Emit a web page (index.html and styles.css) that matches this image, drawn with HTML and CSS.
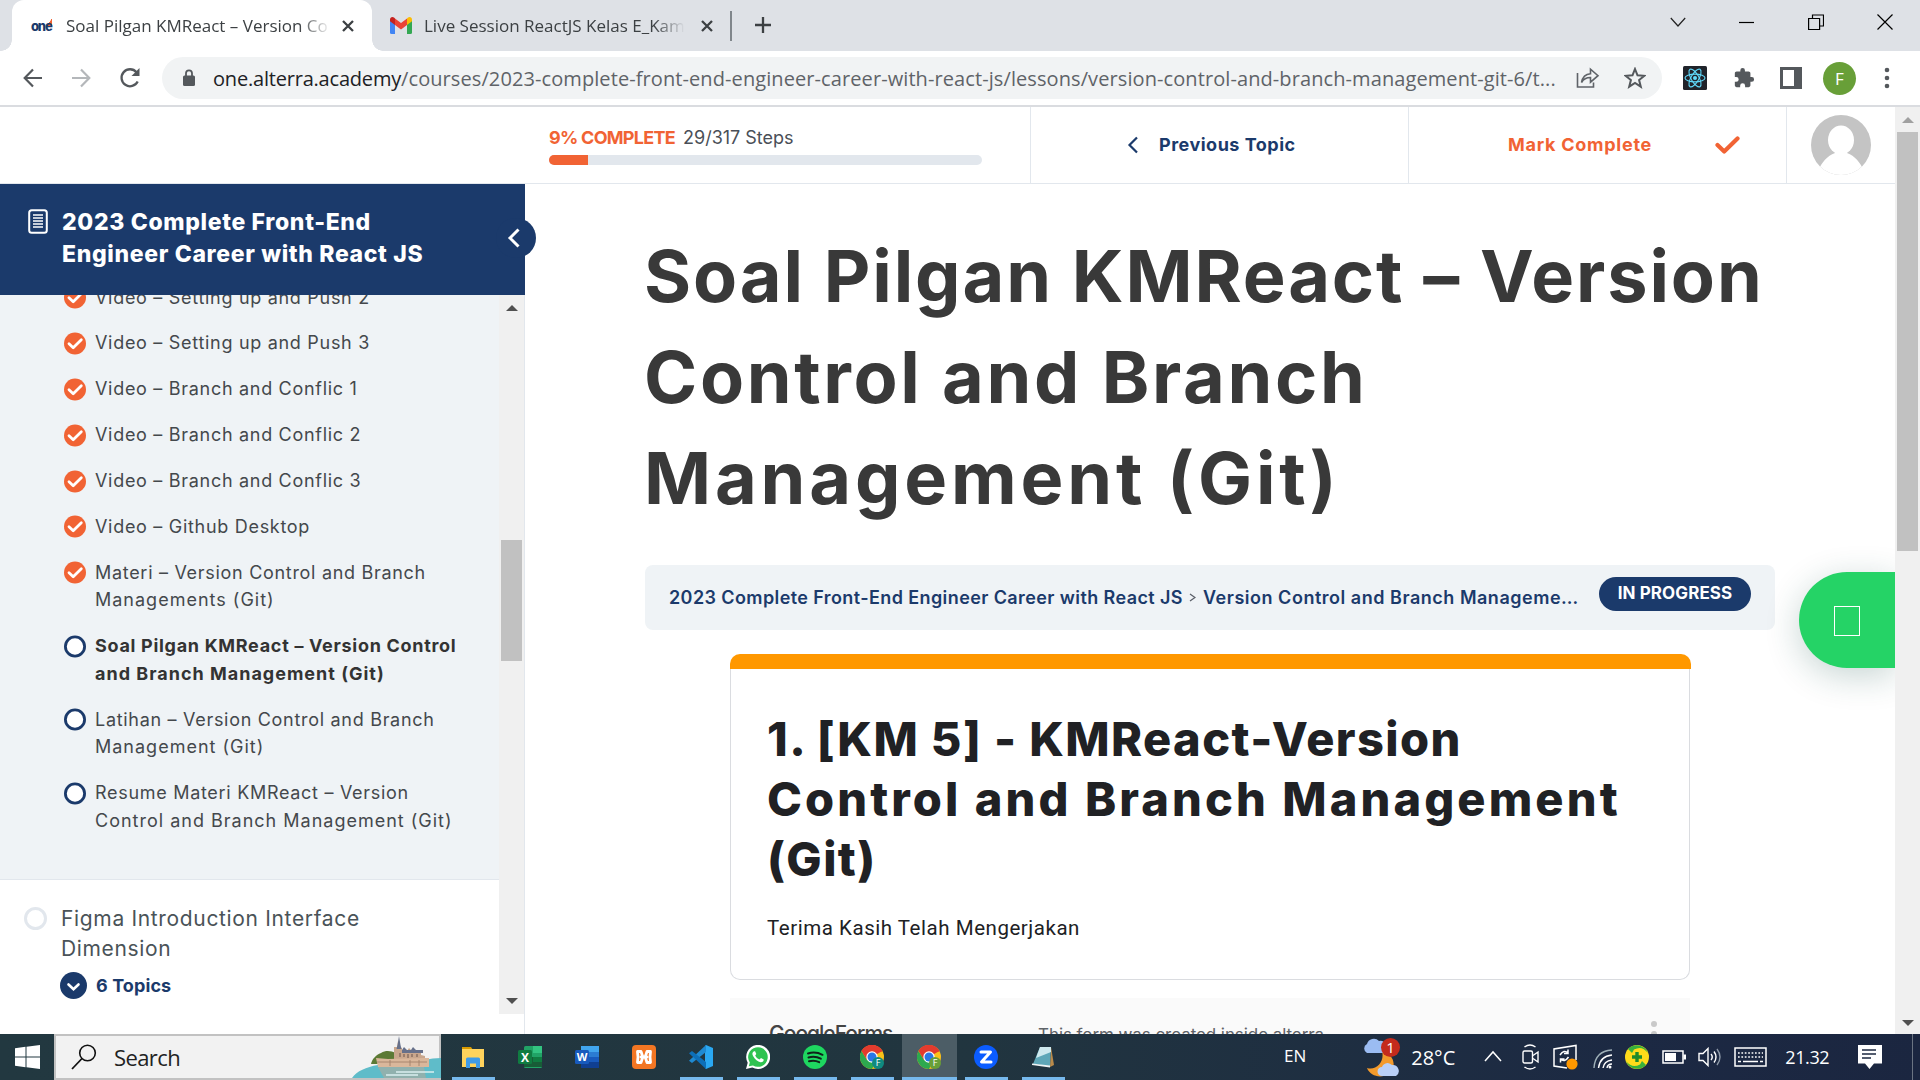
FILE: index.html
```html
<!DOCTYPE html>
<html lang="en">
<head>
<meta charset="utf-8">
<title>Soal Pilgan KMReact – Version Control and Branch Management (Git)</title>
<link rel="stylesheet" href="styles.css">
</head>
<body>
<svg width="0" height="0" class="defs" aria-hidden="true">
  <symbol id="done" viewBox="0 0 22 22"><circle cx="11" cy="11" r="11" fill="#f16334"/><path d="M5 11.3l4.2 4L17.3 7.2" fill="none" stroke="#fff" stroke-width="2.8" stroke-linecap="round" stroke-linejoin="round"/></symbol>
  <symbol id="todo" viewBox="0 0 22 22"><circle cx="11" cy="11" r="9.6" fill="#fff" stroke="#1b3a6b" stroke-width="2.8"/></symbol>
  <symbol id="x" viewBox="0 0 12 12"><path d="M1 1l10 10M11 1L1 11" stroke="#3c4043" stroke-width="2.3"/></symbol>
  <symbol id="chrome" viewBox="0 0 24 24"><circle cx="12" cy="12" r="12" fill="#fbc118"/><path d="M12 12L1.6 6A12 12 0 0 1 22.4 6z" fill="#e33b2e"/><path d="M1.6 6A12 12 0 0 0 12 24L17 15 7 15z" fill="#2da94f"/><path d="M12 6.5h10.6A12 12 0 0 0 1.6 6L7 15z" fill="#e33b2e"/><circle cx="12" cy="12" r="5.7" fill="#fff"/><circle cx="12" cy="12" r="4.5" fill="#2a76e8"/></symbol>
</svg>

<div class="tabstrip">
  <div class="tab active">
    <span class="favicon-one">one</span>
    <span class="tab-title t1">Soal Pilgan KMReact – Version Co</span>
    <svg class="tab-x" width="12" height="12"><use href="#x"/></svg>
  </div>
  <div class="tab second">
    <svg width="22" height="17" viewBox="0 0 22 17"><path d="M0 3v12.5A1.5 1.5 0 0 0 1.500 17H5V6z" fill="#4285f4"/><path d="M22 3v12.500a1.500 1.500 0 0 1-1.500 1.500H17V6z" fill="#34a853"/><path d="M17 1.500V8l5-3.800V2.500c0-2.200-2.300-3.200-4-1.900z" fill="#fbbc04"/><path d="M5 8V1.500l6 4.500 6-4.500V8l-6 4.500z" fill="#ea4335"/><path d="M0 2.500v1.700L5 8V1.500L4 .6C2.300-.7 0 .3 0 2.500z" fill="#c5221f"/></svg>
    <span class="tab-title t2">Live Session ReactJS Kelas E_Kam</span>
    <svg class="tab-x" width="12" height="12"><use href="#x"/></svg>
  </div>
  <span class="tab-sep"></span>
  <svg class="plus" width="18" height="18" viewBox="0 0 18 18"><path d="M9 1v16M1 9h16" stroke="#3c4043" stroke-width="2.300"/></svg>
  <div class="win">
    <svg width="16" height="16" viewBox="0 0 16 16"><path d="M.8 4L8 12l7.200-8" fill="none" stroke="#222" stroke-width="1.200"/></svg>
    <svg width="16" height="16" viewBox="0 0 16 16"><path d="M0 8.500h15" stroke="#000" stroke-width="1.200"/></svg>
    <svg width="16" height="16" viewBox="0 0 16 16"><path d="M.6 4.500h11v11h-11zM4.500 4.500v-3.500h11v11h-4" fill="none" stroke="#000" stroke-width="1.200"/></svg>
    <svg width="16" height="16" viewBox="0 0 16 16"><path d="M.5 .5l15 15M15.500 .5l-15 15" stroke="#000" stroke-width="1.200"/></svg>
  </div>
</div>

<div class="toolbar">
  <svg class="nav-i" width="20" height="20" viewBox="0 0 20 20"><path d="M19 10H2M10 1.500L1.700 10 10 18.500" fill="none" stroke="#54585c" stroke-width="2.200"/></svg>
  <svg class="nav-i" width="20" height="20" viewBox="0 0 20 20"><path d="M1 10h17M10 1.500l8.300 8.500L10 18.500" fill="none" stroke="#b4b7ba" stroke-width="2.200"/></svg>
  <svg class="nav-i" width="22" height="22" viewBox="0 0 22 22"><path d="M18.700 14.500A8.500 8.500 0 1 1 17.500 5.200" fill="none" stroke="#54585c" stroke-width="2.300"/><path d="M20.500 1v8h-8z" fill="#54585c"/></svg>
  <div class="omnibox">
    <svg width="12" height="18" viewBox="0 0 12 18"><rect y="6.500" width="12" height="10.500" rx="1.500" fill="#54585c"/><path d="M3 7V4.300a3 3 0 0 1 6 0V7" fill="none" stroke="#54585c" stroke-width="1.800"/></svg>
    <span class="url"><b>one.alterra.academy</b>/courses/2023-complete-front-end-engineer-career-with-react-js/lessons/version-control-and-branch-management-git-6/t...</span>
    <svg class="share" width="24" height="22" viewBox="0 0 24 22"><path d="M1.500 6v14h16v-4.500M5.500 15.500C6.500 10 9.500 7 14.500 6.700V2.200l7.500 6.500-7.500 6.500v-4.700C10.500 10.500 7.500 12 5.500 15.500z" fill="none" stroke="#5f6368" stroke-width="1.600"/></svg>
    <svg class="star" width="22" height="22" viewBox="0 0 22 22"><path d="M11 2l2.500 6.300 6.800.5-5.200 4.300 1.700 6.600L11 16l-5.800 3.700 1.700-6.600L1.700 8.800l6.800-.5z" fill="none" stroke="#54585c" stroke-width="2"/></svg>
  </div>
  <svg class="ext react" width="24" height="24" viewBox="0 0 24 24"><rect width="24" height="24" rx="1.500" fill="#20232a"/><g fill="none" stroke="#61dafb" stroke-width="1.100"><ellipse cx="12" cy="12" rx="10" ry="3.900"/><ellipse cx="12" cy="12" rx="10" ry="3.900" transform="rotate(60 12 12)"/><ellipse cx="12" cy="12" rx="10" ry="3.900" transform="rotate(120 12 12)"/></g><circle cx="12" cy="12" r="2" fill="#61dafb"/></svg>
  <svg class="ext puzzle" width="22" height="22" viewBox="0 0 24 24"><path fill="#54585c" d="M20.500 11H19V7c0-1.100-.9-2-2-2h-4V3.500a2.500 2.500 0 0 0-5 0V5H4c-1.100 0-2 .9-2 2v3.800h1.500a2.700 2.700 0 0 1 0 5.400H2V20c0 1.100.9 2 2 2h3.800v-1.500a2.700 2.700 0 0 1 5.400 0V22H17c1.100 0 2-.9 2-2v-4h1.500a2.500 2.500 0 0 0 0-5z"/></svg>
  <svg class="ext panel" width="22" height="22" viewBox="0 0 22 22"><path fill-rule="evenodd" d="M0 0h22v22H0zM3 3v16h11V3z" fill="#54585c"/></svg>
  <span class="profile">F</span>
  <svg class="ext menu" width="6" height="22" viewBox="0 0 6 22"><g fill="#54585c"><circle cx="3" cy="3" r="2.300"/><circle cx="3" cy="11" r="2.300"/><circle cx="3" cy="19" r="2.300"/></g></svg>
</div>

<div class="page">
  <div class="content">
    <header class="head">
      <div class="progress">
        <div class="ptext"><b>9% COMPLETE</b><span>29/317 Steps</span></div>
        <div class="bar"><i style="width:9%"></i></div>
      </div>
      <div class="prev">
        <svg width="12" height="18" viewBox="0 0 12 18"><path d="M10 1.500L2.500 9l7.500 7.500" fill="none" stroke="#1b3a6b" stroke-width="2.200"/></svg>
        <span>Previous Topic</span>
      </div>
      <div class="mark">
        <span>Mark Complete</span>
        <svg width="25" height="18" viewBox="0 0 25 18"><path d="M2.500 9l6.700 6.500L22.500 2.500" fill="none" stroke="#f16334" stroke-width="4.200" stroke-linecap="round" stroke-linejoin="round"/></svg>
      </div>
      <div class="user">
        <svg width="60" height="60" viewBox="0 0 60 60"><clipPath id="c"><circle cx="30" cy="30" r="30"/></clipPath><g clip-path="url(#c)"><rect width="60" height="60" fill="#c4c4c4"/><ellipse cx="30" cy="25" rx="13" ry="14.500" fill="#fff"/><path d="M24 32h12v6c8 3 13 9 17 18v6H7v-6c4-9 9-15 17-18z" fill="#fff"/></g></svg>
      </div>
    </header>

    <div class="body">
      <aside class="side">
        <div class="course">
          <svg width="20" height="25" viewBox="0 0 20 25"><rect x="1.200" y="1.200" width="17.600" height="22.600" rx="2.500" fill="none" stroke="#fff" stroke-width="2"/><path d="M5 6h10M5 9h10M5 12h10M5 15h10M5 18h10" stroke="#fff" stroke-width="1.300"/></svg>
          <h2>2023 Complete Front-End<br>Engineer Career with React JS</h2>
          <span class="collapse"><svg width="14" height="20" viewBox="0 0 14 20"><path d="M11.500 1.500L3 10l8.500 8.500" fill="none" stroke="#fff" stroke-width="3"/></svg></span>
        </div>
        <div class="scroller">
          <div class="list">
            <div class="topics">
              <div class="topic"><svg><use href="#done"/></svg><p>Video – Setting up and Push 2</p></div>
              <div class="topic"><svg><use href="#done"/></svg><p>Video – Setting up and Push 3</p></div>
              <div class="topic"><svg><use href="#done"/></svg><p>Video – Branch and Conflic 1</p></div>
              <div class="topic"><svg><use href="#done"/></svg><p>Video – Branch and Conflic 2</p></div>
              <div class="topic"><svg><use href="#done"/></svg><p>Video – Branch and Conflic 3</p></div>
              <div class="topic"><svg><use href="#done"/></svg><p>Video – Github Desktop</p></div>
              <div class="topic"><svg><use href="#done"/></svg><p>Materi – Version Control and Branch<br><span class="wide">Managements (Git)</span></p></div>
              <div class="topic current"><svg><use href="#todo"/></svg><p>Soal Pilgan KMReact – Version Control<br><span class="wide">and Branch Management (Git)</span></p></div>
              <div class="topic"><svg><use href="#todo"/></svg><p>Latihan – Version Control and Branch<br><span class="wide">Management (Git)</span></p></div>
              <div class="topic"><svg><use href="#todo"/></svg><p>Resume Materi KMReact – Version<br><span class="wide">Control and Branch Management (Git)</span></p></div>
            </div>
            <div class="lesson">
              <span class="ring"></span>
              <div>
                <p class="lname">Figma Introduction Interface<br>Dimension</p>
                <div class="more"><svg width="27" height="27" viewBox="0 0 27 27"><circle cx="13.500" cy="13.500" r="13.500" fill="#1b3a6b"/><path d="M8.500 12.500l5 4.800 5-4.800" fill="none" stroke="#fff" stroke-width="2.600" stroke-linecap="round"/></svg><b>6 Topics</b></div>
              </div>
            </div>
          </div>
          <div class="sbar"><i class="up"></i><i class="thumb"></i><i class="down"></i></div>
        </div>
      </aside>

      <main class="main">
        <h1>Soal Pilgan KMReact – Version<br><span class="h1b">Control and Branch</span><br><span class="h1c">Management (Git)</span></h1>
        <div class="crumbs">
          <span class="c1">2023 Complete Front-End Engineer Career with React JS</span>
          <svg width="7" height="9" viewBox="0 0 7 9"><path d="M1 1l5 3.500L1 8" fill="none" stroke="#5a5f68" stroke-width="1.300"/></svg>
          <span class="c2">Version Control and Branch Manageme…</span>
          <span class="pill">IN PROGRESS</span>
        </div>
        <div class="form">
          <div class="stripe"></div>
          <div class="card">
            <h3>1. [KM 5] - KMReact-Version<br><span class="h3b">Control and Branch Management</span><br>(Git)</h3>
            <p>Terima Kasih Telah Mengerjakan</p>
          </div>
          <div class="foot"><span class="gf">GoogleForms</span><span class="made">This form was created inside alterra</span><span class="dots"><i></i><i></i></span></div>
        </div>
      </main>
    </div>
    <div class="wa"><i></i></div>
  </div>
  <div class="pbar"><i class="up"></i><i class="thumb"></i><i class="down"></i></div>
</div>

<div class="taskbar">
  <div class="start"><svg width="25" height="24" viewBox="0 0 25 24"><path d="M0 3.300L10.500 1.800V11.500H0zM11.500 1.700L25 0v11.500H11.500zM0 12.500h10.500v9.700L0 20.700zM11.500 12.500H25V24l-13.500-1.700z" fill="#fff"/></svg></div>
  <div class="search">
    <svg width="26" height="26" viewBox="0 0 26 26"><circle cx="16.500" cy="9" r="7.800" fill="none" stroke="#111" stroke-width="1.600"/><path d="M11 14.500L1 25" stroke="#111" stroke-width="1.800"/></svg>
    <span>Search</span>
    <svg class="castle" width="89" height="42" viewBox="0 0 89 42">
      <defs><linearGradient id="sea" x1="1"><stop offset="0" stop-color="#2d9fb0"/><stop offset=".5" stop-color="#a9dbe0"/><stop offset="1" stop-color="#5fbcc9"/></linearGradient></defs>
      <path d="M0 42C5 35 14 31 26 29l46-5q9-2 17-2v20z" fill="url(#sea)"/>
      <path d="M26 31h46l2 11H32z" fill="#b8a898" opacity=".55"/>
      <path d="M19 28c1-5 5-9 10-11 5-3 10-2 15 0l2 11z" fill="#5c7a35"/>
      <path d="M42 22V11h3l1-6 2 6 2 1v3h5l2-3 3 3h9v4l4 1v4H42z" fill="#c9a78d"/>
      <path d="M45.500 9l1.500-9 1.500 9 1 4h-5zM50 14l2-3 3 3h4l2-3 3 3h7v3H50z" fill="#66708a"/>
      <path d="M48 17v4M52 18v3M56 18v4M60 18v3M65 18v3" stroke="#7b6358" stroke-width="1.200"/>
      <path d="M24 22l12 1 37-1h4v9H26z" fill="#dab79b"/><path d="M25 26h50M38 24v6M58 24v6M67 24v6" stroke="#a3826b" stroke-width=".9"/>
      <path d="M44 36h38M34 39h32" stroke="#d9eef0" stroke-width="1.400"/>
    </svg>
  </div>
  <div class="apps">
    <div class="app run"><svg viewBox="0 0 24 24"><path d="M1 2h9l2 3H1z" fill="#d99b00"/><path d="M1 4h22v18H1z" fill="#ffd35c"/><path d="M5 23v-9q0-1.500 1.500-1.500h11Q19 12.500 19 14v9h-4v-4.500H9V23z" fill="#3f9be8"/></svg></div>
    <div class="app"><svg viewBox="0 0 24 24"><rect x="6" y="1" width="18" height="22" rx="1.500" fill="#21a366"/><path d="M15 1h9v7h-9z" fill="#33c481"/><path d="M6 12h18v10H6z" fill="#185c37"/><path d="M15 12h9v5h-9z" fill="#107c41"/><rect y="5" width="14" height="14" rx="1.500" fill="#107c41"/><text x="7" y="16.500" class="glyph" font-size="12">X</text></svg></div>
    <div class="app"><svg viewBox="0 0 24 24"><rect x="6" y="1" width="18" height="22" rx="1.500" fill="#2b7cd3"/><path d="M6 1h18v6H6z" fill="#41a5ee"/><path d="M6 12h18v5H6z" fill="#185abd"/><path d="M6 17h18v6H6z" fill="#103f91"/><rect y="5" width="14" height="14" rx="1.500" fill="#185abd"/><text x="7" y="16.300" class="glyph" font-size="11">W</text></svg></div>
    <div class="app"><svg viewBox="0 0 24 24"><rect width="24" height="24" rx="4" fill="#f37623"/><path d="M9 12h6M6 12l-.5-5.500H9l1.500 4.500M18 12l.5-5.500H15l-1.500 4.500M6 12l-.5 5.500H9l1.500-4.500M18 12l.5 5.500H15l-1.500-4.500" fill="none" stroke="#fff" stroke-width="2.800" stroke-linejoin="round" stroke-linecap="round"/></svg></div>
    <div class="app run"><svg viewBox="0 0 24 24"><path d="M17 0l7 3v18l-7 3-1-1V1z" fill="#2aa8f2"/><path d="M17 0v7L3 18 0 15.800z" fill="#1f8ad2"/><path d="M17 24v-7L3 6 0 8.200z" fill="#0d6fb8"/></svg></div>
    <div class="app run"><svg viewBox="0 0 24 24"><path d="M0 24l1.700-6.200A12 12 0 1 1 6.300 22.400z" fill="#fff"/><path d="M2.800 21.300l1-3.800A9.800 9.800 0 1 1 7 20.500z" fill="#2fc351"/><path d="M8 6.200c-2 1-2 3-.8 5 1.800 3.200 4.600 5.500 7.300 6 2 .2 3.300-1 3.200-2.700l-2.700-1.400-1.500 1.500c-2-.8-3.400-2.200-4.300-4l1.100-1.500-1.200-2.800z" fill="#fff"/></svg></div>
    <div class="app run"><svg viewBox="0 0 24 24"><circle cx="12" cy="12" r="12" fill="#1ed760"/><path d="M5 8.500c5-1.500 10-1 14.500 1.300M5.500 12.500c4.500-1.200 8.500-.8 12.300 1.200M6 16.200c4-1 7-.7 10.200 1" fill="none" stroke="#10221a" stroke-width="2" stroke-linecap="round"/></svg></div>
    <div class="app run"><svg viewBox="0 0 24 24"><use href="#chrome"/><circle cx="18" cy="18" r="6" fill="#0f8a80"/><text x="18" y="21.300" class="glyph thin" font-size="9">F</text></svg></div>
    <div class="app run on"><svg viewBox="0 0 24 24"><use href="#chrome"/><circle cx="18" cy="18" r="6" fill="#689f38"/><text x="18" y="21.300" class="glyph thin" font-size="9">F</text></svg></div>
    <div class="app run"><svg viewBox="0 0 24 24"><circle cx="12" cy="12" r="12" fill="#0b5cff"/><path d="M7 7h9.500L7.500 17H17" fill="none" stroke="#fff" stroke-width="3" stroke-linejoin="round" stroke-linecap="round"/></svg></div>
    <div class="app run"><svg viewBox="0 0 24 24"><path d="M20 2l3 18-4 2z" fill="#b98a4a"/><path d="M9 2h11l-1 19-17-2z" fill="#5fa7b8"/><path d="M9 2h11v5L5 13z" fill="#cfe9ee"/><path d="M1 18.500l18 2V22.500L1 20z" fill="#eef4f5"/></svg></div>
  </div>
  <span class="lang">EN</span>
  <svg class="weather" width="38" height="42" viewBox="0 0 38 42"><path d="M20 15c12 3 16 16 6 23-7 5-18 2-21-6 9 3 18-6 15-17z" fill="#f39a2b"/><path d="M5 17a5 5 0 0 1 0-9 7 7 0 0 1 12-3 5.500 5.500 0 0 1 3 12z" fill="#9bbcf2"/><path d="M20 40a4.500 4.500 0 0 1 0-9 6 6 0 0 1 10-2 6 6 0 0 1 4 11z" fill="#b9d0f7"/><circle cx="28.500" cy="11.500" r="9.500" fill="#c42b1c"/><text x="28.500" y="17" class="glyph thin" font-size="15">1</text></svg>
  <span class="temp">28°C</span>
  <svg class="tr chev" width="18" height="12" viewBox="0 0 18 12"><path d="M1 11l8-9 8 9" fill="none" stroke="#fff" stroke-width="1.500"/></svg>
  <svg class="tr cam" width="17" height="28" viewBox="0 0 17 28" fill="none" stroke="#fff" stroke-width="1.400"><rect x="1" y="8" width="9.500" height="12" rx="1.500"/><path d="M11 12.500l5-3.500v10l-5-3.500M2.500 4q5.500-4 11 0M2.500 24q5.500 4 11 0"/></svg>
  <svg class="tr upd" width="25" height="26" viewBox="0 0 25 26"><path d="M14 24L1 22V5l22-3.500V16M7 11q4-6 8-2M15 5.500V9.500h-4M15.500 13q-4 6-8 2M7.500 18.500V15h4" fill="none" stroke="#fff" stroke-width="1.500"/><circle cx="19" cy="20" r="5.600" fill="#ff9800"/></svg>
  <svg class="tr wifi" width="20" height="20" viewBox="0 0 20 20"><path d="M1 19Q2 2 19 1" fill="none" stroke="#9fb0b8" stroke-width="1.400"/><path d="M5.500 19Q7 7 19 6M10 19q1-7 9-8M14 19q.5-4 5-4" fill="none" stroke="#fff" stroke-width="1.400"/><circle cx="17" cy="18" r="1.500" fill="#fff"/></svg>
  <svg class="tr plus360" width="24" height="24" viewBox="0 0 24 24"><circle cx="12" cy="12" r="12" fill="#ffdb1a"/><path d="M3 4A12 12 0 0 1 23 8q-6-8-14-3.500L7 8zM21 20A12 12 0 0 1 1 16q6 8 14 3.500l2-3.500z" fill="#38b13c"/><path d="M12 7v10M7 12h10" stroke="#1f8a2b" stroke-width="3.400"/></svg>
  <svg class="tr batt" width="24" height="14" viewBox="0 0 24 14"><path d="M1 1h20v12H1z" fill="none" stroke="#fff" stroke-width="1.500"/><path d="M3 3h11v8H3zM21.500 4.500H24v5h-2.500z" fill="#fff"/></svg>
  <svg class="tr vol" width="23" height="20" viewBox="0 0 23 20" fill="none" stroke="#fff" stroke-width="1.400"><path d="M1 6.500h4L10 1.500v17l-5-5H1zM13 7q2.500 3 0 6"/><path d="M16 4.500q4 5.500 0 11"/><path d="M19 2q6 8 0 16" stroke="#8d99a8"/></svg>
  <svg class="tr kbd" width="33" height="20" viewBox="0 0 33 20"><path d="M1 1h31v18H1z" fill="none" stroke="#fff" stroke-width="1.500"/><path d="M4 6h25M4 10h25" stroke="#fff" stroke-width="1.600" stroke-dasharray="1.700 1.700"/><path d="M4 14.500h3M9 14.500h15M26 14.500h3" stroke="#fff" stroke-width="1.600"/></svg>
  <span class="clock">21.32</span>
  <svg class="tr note" width="24" height="24" viewBox="0 0 24 24"><path d="M0 0h24v18.500h-8L11.500 24 7 18.500H0z" fill="#fff"/><path d="M4 5h14M4 9h14M4 13h9" stroke="#1d2940" stroke-width="1.500"/></svg>
  <span class="peek"></span>
</div>
</body>
</html>
```
FILE: styles.css
```css
* { box-sizing: border-box; }
body {
  margin: 0; width: 1920px; height: 1080px; overflow: hidden;
  display: flex; flex-direction: column; background: #fff;
  font-family: "Inter", "Liberation Sans", sans-serif; color: #393939; white-space: nowrap;
}
svg { display: block; flex: none; }
h1, h2, h3, p { margin: 0; }
.defs { position: absolute; }

/* browser tabs */
.tabstrip { height: 51px; flex: none; background: #dee1e6; display: flex; align-items: flex-start; padding-left: 12px; font-family: "Open Sans", sans-serif; font-size: 17px; color: #3c4043; }
.tab { height: 51px; display: flex; align-items: center; }
.tab.active { width: 360px; background: #fff; border-radius: 12px 12px 0 0; padding-left: 19px; position: relative; }
.tab.active::before, .tab.active::after { content: ""; position: absolute; bottom: 0; width: 11px; height: 11px; }
.tab.active::before { left: -11px; background: radial-gradient(circle at 0 0, #dee1e6 10.5px, #fff 11px); }
.tab.active::after { right: -11px; background: radial-gradient(circle at 100% 0, #dee1e6 10.5px, #fff 11px); }
.favicon-one { width: 23px; margin-right: 12px; font: 800 13px/18px "Inter", sans-serif; letter-spacing: -1.2px; color: #1b3a6b; background: linear-gradient(125deg, transparent 80%, #f16334 81%) 0 0 / 21px 9px no-repeat; }
.tab-title { height: 30px; line-height: 30px; overflow: hidden; -webkit-mask-image: linear-gradient(90deg, #000 88%, transparent); mask-image: linear-gradient(90deg, #000 88%, transparent); }
.t1 { width: 265px; }
.t2 { width: 261px; margin-left: 12px; }
.tab-x { margin-left: 11px; }
.tab.second { padding-left: 18px; }
.second .tab-x { margin-left: 16px; }
.tab-sep { width: 1.5px; height: 30px; margin: 11px 0 0 17px; background: #80868b; }
.plus { margin: 16px 0 0 22px; }
.win { margin-left: auto; margin-right: 27px; margin-top: 14px; display: flex; gap: 53px; }

/* address bar */
.toolbar { height: 56px; flex: none; display: flex; align-items: center; border-bottom: 2px solid #dadce0; padding-left: 23px; }
.nav-i { margin-right: 28px; }
.omnibox { width: 1500px; height: 42px; margin-left: -7px; border-radius: 21px; background: #f1f3f4; display: flex; align-items: center; padding-left: 21px; }
.url { width: 1345px; margin: 1px 0 0 18px; font: 20px/30px "Open Sans", sans-serif; letter-spacing: .09px; color: #5f6368; }
.url b { font-weight: 400; color: #202124; letter-spacing: -.2px; }
.share { margin-left: 18px; }
.star { margin-left: 24px; }
.react { margin-left: 21px; }
.puzzle { margin-left: 26px; }
.panel { margin-left: 25px; }
.profile { width: 33px; height: 33px; margin-left: 21px; border-radius: 50%; background: #689f38; color: #fff; font: 17px/33px "Open Sans", sans-serif; text-align: center; }
.menu { margin-left: 28px; }

/* page */
.page { height: 927px; flex: none; display: flex; }
.content { width: 1895px; position: relative; overflow: hidden; }
.head { height: 77px; display: flex; padding-left: 549px; border-bottom: 1px solid #e2e7ed; font-size: 18px; }
.progress { width: 482px; border-right: 1px solid #e2e7ed; padding-top: 17px; }
.ptext { height: 27px; line-height: 27px; display: flex; gap: 8px; color: #4a4f57; }
.ptext b { font-weight: 700; color: #f16334; letter-spacing: -.72px; }
.bar { width: 433px; height: 10px; margin-top: 4px; border-radius: 5px; background: #e2e7ed; overflow: hidden; }
.bar i { display: block; height: 100%; background: #f16334; }
.prev, .mark { display: flex; align-items: center; font-weight: 700; color: #1b3a6b; }
.prev span, .mark span { margin-top: -1px; }
.prev { width: 378px; padding-left: 96px; border-right: 1px solid #e2e7ed; gap: 20px; letter-spacing: .5px; }
.mark { width: 378px; padding-left: 99px; border-right: 1px solid #e2e7ed; gap: 63px; color: #f16334; letter-spacing: .74px; }
.user { padding: 8px 0 0 24px; }

.body { height: 850px; display: flex; }
.side { width: 525px; border-right: 1px solid #e2e7ed; }
.course { width: 525px; height: 111px; position: relative; background: #1b3a6b; color: #fff; display: flex; padding: 22px 0 0 28px; }
.course svg { margin-top: 3px; }
.course h2 { margin-left: 14px; font-size: 23px; line-height: 32px; font-weight: 800; letter-spacing: .65px; }
.collapse { position: absolute; right: -11px; top: 34px; width: 40px; height: 40px; border-radius: 50%; background: #1b3a6b; }
.course .collapse svg { margin: 10px 0 0 11px; }
.scroller { height: 719px; display: flex; overflow: hidden; }
.list { width: 499px; }
.topics { margin-top: -11.5px; padding: 0 0 44.5px 64px; background: #eff3f6; border-bottom: 1px solid #e2e7ed; display: flex; flex-direction: column; gap: 18.3px; }
.topic { display: flex; gap: 9px; font-size: 18px; line-height: 27.6px; letter-spacing: .7px; }
.topic svg { width: 22px; height: 23px; margin-top: 2.500px; }
.topic p { color: #44484c; }
.wide { letter-spacing: 1px; }
.topic.current p { font-weight: 700; color: #333; }
.lesson { display: flex; padding: 24px 0 0 24px; gap: 14px; }
.ring { width: 23px; height: 23px; margin-top: 3px; border: 3px solid #e2e7ed; border-radius: 50%; }
.lname { font-size: 21px; line-height: 30px; letter-spacing: .66px; color: #4a5358; }
.more { display: flex; align-items: center; gap: 9px; margin: 8px 0 0 -1px; font-size: 18px; color: #1b3a6b; }
.more b { letter-spacing: .1px; }

.sbar, .pbar { width: 25px; background: #f0f0f0; display: flex; flex-direction: column; align-items: center; }
.up, .down { width: 0; height: 0; border: 6px solid transparent; }
.up { border-top: 0; border-bottom-color: #505050; }
.down { border-bottom: 0; border-top-color: #505050; margin-top: auto; }
.thumb { background: #c1c1c1; width: 21px; }
.sbar .up { margin-top: 10px; }
.sbar .thumb { height: 121px; margin-top: 229px; }
.sbar .down { margin-bottom: 10px; }
.pbar .up { margin-top: 10px; border-bottom-color: #a0a0a0; }
.pbar .thumb { height: 419px; margin-top: 9px; }
.pbar .down { margin-bottom: 8px; }

.main { padding: 41px 0 0 120px; }
h1 { font-size: 72px; line-height: 101px; font-weight: 700; letter-spacing: 1.88px; color: #393939; margin-left: -1px; }
.h1b { letter-spacing: 2.65px; }
.h1c { letter-spacing: 3.85px; }
.crumbs { width: 1130px; height: 65px; margin-top: 37px; padding-left: 24px; border-radius: 8px; background: #eff3f6; display: flex; align-items: center; font-size: 18px; font-weight: 600; color: #1b3a6b; }
.c1 { width: 514px; letter-spacing: .4px; }
.crumbs svg { margin: 0 7px 0 6px; }
.c2 { width: 377px; letter-spacing: .52px; }
.pill { width: 152px; height: 34px; margin: -7px 0 0 19px; border-radius: 17px; background: #1b3a6b; color: #fff; font-size: 17px; line-height: 33px; font-weight: 700; text-align: center; letter-spacing: .1px; }
.form { width: 961px; margin: 24px 0 0 85px; }
.stripe { height: 15px; background: #ff9800; border-radius: 10px 10px 0 0; }
.card { width: 960px; height: 311px; border: 1px solid #dadce0; border-top: 0; border-radius: 0 0 10px 10px; padding: 40px 0 0 36px; color: #202124; }
.card h3 { font-size: 47px; line-height: 60px; font-weight: 800; letter-spacing: 1.4px; }
.h3b { letter-spacing: 3.1px; }
.card p { margin-top: 24px; font: 20.5px/30px "Roboto", sans-serif; letter-spacing: .54px; }
.foot { width: 960px; height: 60px; margin-top: 18px; padding: 24px 33px 0 39px; background: #fafafa; display: flex; color: #5f6368; line-height: 24px; }
.gf { width: 123px; font-size: 21px; font-weight: 500; letter-spacing: -1px; color: #444; }
.made { margin-left: 146px; font-size: 17px; line-height: 26px; letter-spacing: -.07px; }
.dots { margin-left: auto; margin-top: -1px; display: flex; flex-direction: column; gap: 4px; }
.dots i { width: 6px; height: 6px; border-radius: 50%; background: #c9c9c9; }

/* floating chat button */
.wa { position: absolute; right: 0; top: 465px; width: 96px; height: 96px; border-radius: 48px 0 0 48px; background: #25d366; box-shadow: 0 8px 34px rgba(20, 80, 70, .24); }
.wa i { display: block; width: 26px; height: 30px; margin: 34px 0 0 35px; border: 1.5px solid #fff; }

/* taskbar */
.taskbar { height: 46px; flex: none; display: flex; align-items: center; background: linear-gradient(90deg, #223840 0, #21353f 50%, #1c2943 85%, #1b2640 100%); color: #fff; font-family: "Open Sans", sans-serif; position: relative; z-index: 2; }
.start { width: 54px; padding-left: 15px; }
.search { width: 387px; height: 46px; background: #f2f2f2; border: 2px solid #c2c2c2; display: flex; align-items: center; padding-left: 15px; color: #222; }
.search span { margin-left: 17px; font-size: 22px; letter-spacing: -.6px; }
.castle { margin-left: auto; margin-right: -2px; }
.apps { display: flex; margin-left: 5px; }
.app { width: 57px; height: 46px; padding: 11px 0 0 14.500px; position: relative; }
.app svg { width: 24px; height: 24px; }
.app.run::after { content: ""; position: absolute; left: 6px; bottom: 0; width: 43px; height: 3px; background: #76b9ed; }
.app.on { background: linear-gradient(#4c5d66, #4c5d66) 0 0 / 55px 46px no-repeat; }
.app.on::after { left: 0; width: 55px; }
.glyph { fill: #fff; font-family: "Open Sans", sans-serif; font-weight: 700; text-anchor: middle; }
.thin { font-weight: 400; }
.lang { margin: -4px 0 0 211px; font-size: 17px; }
.weather { margin: -1px 0 0 56px; }
.temp { margin: 1px 0 0 11px; font-size: 20px; }
.chev { margin: -2px 0 0 29px; }
.cam { margin-left: 20px; }
.upd { margin-left: 14px; }
.wifi { margin: 4px 0 0 15px; }
.plus360 { margin-left: 12px; }
.batt { margin-left: 13px; }
.vol { margin-left: 12px; }
.kbd { margin: -1px 0 0 13px; }
.clock { margin-left: 18px; font-size: 18px; letter-spacing: -.4px; }
.note { margin-left: auto; margin-right: 30px; }
.peek { width: 1.5px; height: 46px; margin-right: 7px; background: #6b7482; }
```
